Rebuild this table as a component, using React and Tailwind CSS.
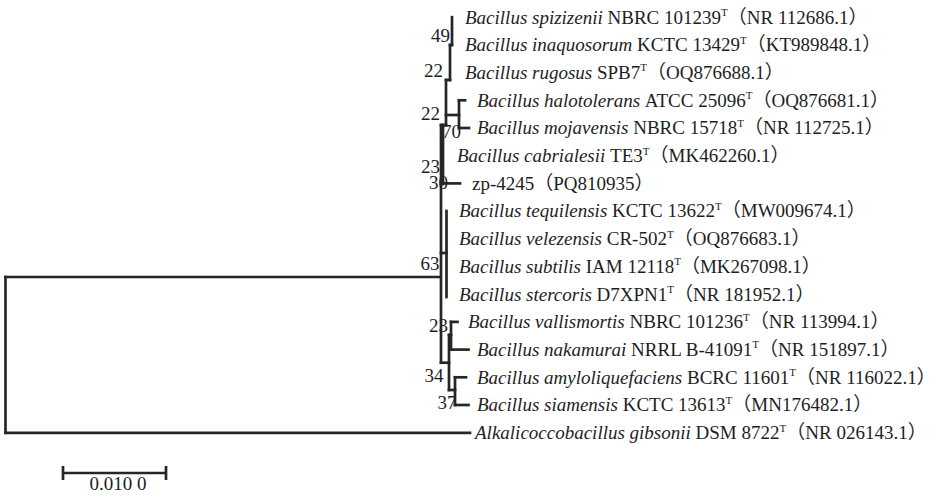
const leaves = [
  { x: 465, name: "Bacillus spizizenii", strain: "NBRC 101239", acc: "NR 112686.1" },
  { x: 465, name: "Bacillus inaquosorum", strain: "KCTC 13429", acc: "KT989848.1" },
  { x: 465, name: "Bacillus rugosus", strain: "SPB7", acc: "OQ876688.1" },
  { x: 477, name: "Bacillus halotolerans", strain: "ATCC 25096", acc: "OQ876681.1" },
  { x: 477, name: "Bacillus mojavensis", strain: "NBRC 15718", acc: "NR 112725.1" },
  { x: 457, name: "Bacillus cabrialesii", strain: "TE3", acc: "MK462260.1" },
  { x: 472, name: null, strain: "zp-4245", acc: "PQ810935" },
  { x: 459, name: "Bacillus tequilensis", strain: "KCTC 13622", acc: "MW009674.1" },
  { x: 459, name: "Bacillus velezensis", strain: "CR-502", acc: "OQ876683.1" },
  { x: 459, name: "Bacillus subtilis", strain: "IAM 12118", acc: "MK267098.1" },
  { x: 459, name: "Bacillus stercoris", strain: "D7XPN1", acc: "NR 181952.1" },
  { x: 468, name: "Bacillus vallismortis", strain: "NBRC 101236", acc: "NR 113994.1" },
  { x: 477, name: "Bacillus nakamurai", strain: "NRRL B-41091", acc: "NR 151897.1" },
  { x: 477, name: "Bacillus amyloliquefaciens", strain: "BCRC 11601", acc: "NR 116022.1" },
  { x: 477, name: "Bacillus siamensis", strain: "KCTC 13613", acc: "MN176482.1" },
  { x: 475, name: "Alkalicoccobacillus gibsonii", strain: "DSM 8722", acc: "NR 026143.1" },
];

const row = (i) => 17.2 + 27.7 * i;

// bootstrap values: x is the left edge, y the baseline
const support = [
  { x: 431, y: 42, v: "49" },
  { x: 424, y: 77, v: "22" },
  { x: 421, y: 120, v: "22" },
  { x: 442, y: 137.5, v: "70" },
  { x: 421, y: 172.5, v: "23" },
  { x: 429, y: 189, v: "30" },
  { x: 420.5, y: 270, v: "63" },
  { x: 429, y: 332, v: "23" },
  { x: 424.5, y: 382, v: "34" },
  { x: 437.5, y: 409, v: "37" },
];

const branches = [
  // root
  "M 5.5 277 V 432.8",
  "M 5.5 277 H 440",
  "M 5.5 432.8 H 470",
  // main stem
  "M 441 125 V 362.7",
  "M 443 125 V 184",
  "M 443 183.4 H 460",
  // upper clade
  "M 452 17.2 V 45",
  "M 450 45 H 452",
  "M 450 45 V 80",
  "M 446 80 H 450",
  "M 446 80 V 125",
  "M 441 125 H 446",
  "M 446 115 H 459",
  "M 459 100.3 V 128",
  "M 459 100.3 H 465",
  "M 459 128 H 469",
  // tequilensis group
  "M 446.5 211 V 297",
  "M 441 253 H 446.5",
  // lower clade
  "M 441 362.7 H 449",
  "M 449 335 V 390",
  "M 449 335 H 451",
  "M 451 321.9 V 349.6",
  "M 451 321.9 H 457.5",
  "M 451 349.6 H 468.5",
  "M 449 390 H 455",
  "M 455 377.3 V 405",
  "M 455 377.3 H 466",
  "M 455 405 H 468.5",
];

function App() {
  return (
    <div className="w-[947px] h-[498px] bg-white overflow-hidden font-[family-name:Liberation_Serif,Noto_Sans_CJK_SC,serif]">
      <svg
        width="947"
        height="498"
        viewBox="0 0 947 498"
        fontFamily="'Liberation Serif', 'Noto Sans CJK SC', serif"
        className="block fill-[#1e1e1e]"
      >
        {leaves.map((leaf, i) => (
          <text key={i} x={leaf.x} y={row(i) + 6.3} fontSize="19">
            {leaf.name && <tspan fontStyle="italic">{leaf.name} </tspan>}
            {leaf.strain}
            {leaf.name && (
              <tspan fontSize="11" dy="-7.5">
                T
              </tspan>
            )}
            <tspan dy={leaf.name ? 7.5 : 0}>（{leaf.acc}）</tspan>
          </text>
        ))}

        {support.map((s, i) => (
          <text key={i} x={s.x} y={s.y} fontSize="19">
            {s.v}
          </text>
        ))}

        <g stroke="#262626" strokeWidth="2.7" fill="none" strokeLinecap="square">
          {branches.map((d, i) => (
            <path key={i} d={d} />
          ))}
        </g>

        {/* scale bar */}
        <g stroke="#262626" strokeWidth="2.7" fill="none">
          <path d="M 63 473 H 166" />
          <path d="M 63 466 V 480" />
          <path d="M 166 466 V 480" />
        </g>
        <text x="118" y="490" fontSize="19" textAnchor="middle">
          0.010 0
        </text>
      </svg>
    </div>
  );
}

export default App;
